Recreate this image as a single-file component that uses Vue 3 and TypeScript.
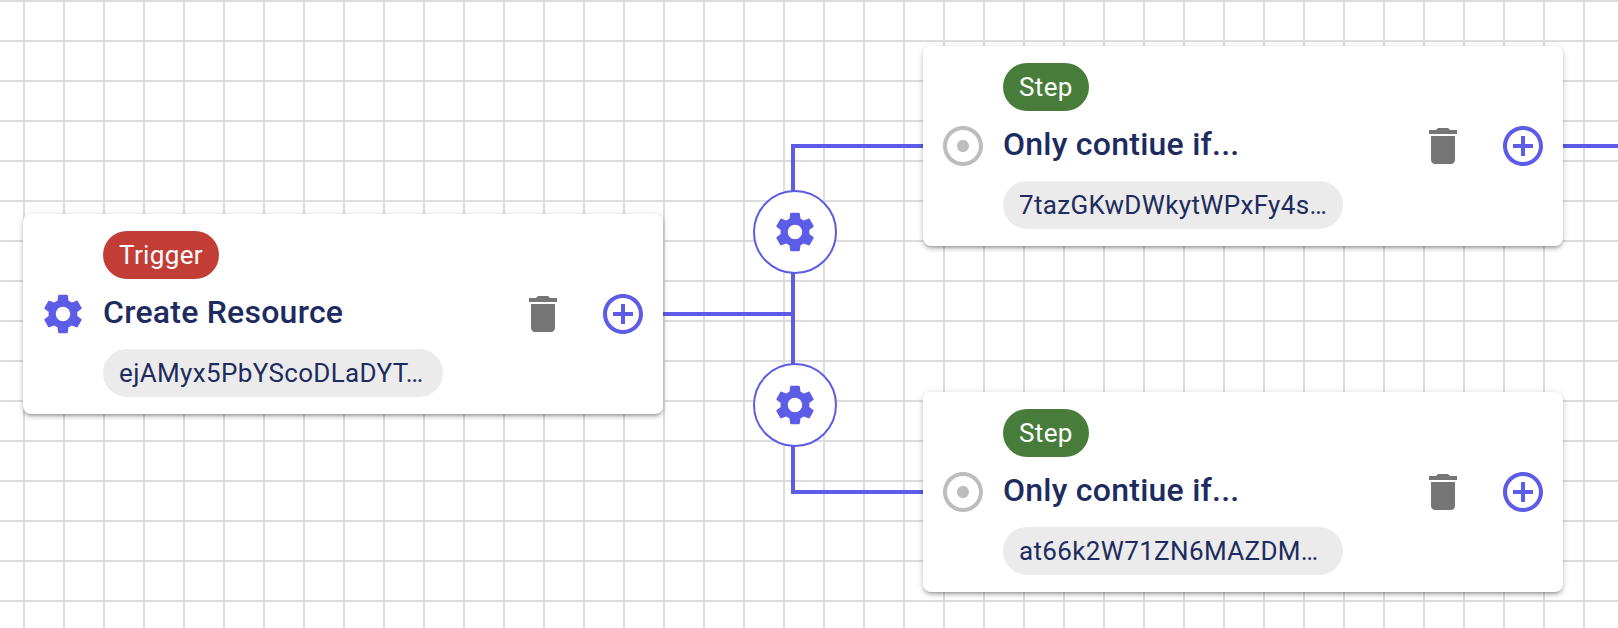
<script setup lang="ts">
interface FlowNode {
  id: string
  kind: 'trigger' | 'step'
  label: string
  title: string
  resource: string
  left: number
  top: number
}

const nodes: FlowNode[] = [
  { id: 'a', kind: 'trigger', label: 'Trigger', title: 'Create Resource', resource: 'ejAMyx5PbYScoDLaDYT…', left: 23, top: 214 },
  { id: 'b', kind: 'step', label: 'Step', title: 'Only contiue if...', resource: '7tazGKwDWkytWPxFy4s…', left: 923, top: 46 },
  { id: 'c', kind: 'step', label: 'Step', title: 'Only contiue if...', resource: 'at66k2W71ZN6MAZDM…', left: 923, top: 392 }
]

const gears = [
  { id: 'g1', left: 753, top: 190 },
  { id: 'g2', left: 753, top: 363 }
]

const gearPath = 'M19.14 12.94c.04-.3.06-.61.06-.94 0-.32-.02-.64-.07-.94l2.03-1.58c.18-.14.23-.41.12-.61l-1.92-3.32c-.12-.22-.37-.29-.59-.22l-2.39.96c-.5-.38-1.03-.7-1.62-.94l-.36-2.54c-.04-.24-.24-.41-.48-.41h-3.84c-.24 0-.43.17-.47.41l-.36 2.54c-.59.24-1.13.57-1.62.94l-2.39-.96c-.22-.08-.47 0-.59.22L2.74 8.87c-.12.21-.08.47.12.61l2.03 1.58c-.05.3-.09.63-.09.94s.02.64.07.94l-2.03 1.58c-.18.14-.23.41-.12.61l1.92 3.32c.12.22.37.29.59.22l2.39-.96c.5.38 1.03.7 1.62.94l.36 2.54c.05.24.24.41.48.41h3.84c.24 0 .44-.17.47-.41l.36-2.54c.59-.24 1.13-.56 1.62-.94l2.39.96c.22.08.47 0 .59-.22l1.92-3.32c.12-.22.07-.47-.12-.61l-2.01-1.58zM12 15.6c-1.98 0-3.6-1.62-3.6-3.6s1.62-3.6 3.6-3.6 3.6 1.62 3.6 3.6-1.62 3.6-3.6 3.6z'
</script>

<template>
  <div class="canvas">
    <svg class="wires" width="1618" height="628" viewBox="0 0 1618 628">
      <path d="M663 314H793" />
      <path d="M923 146H793V492H923" />
      <path d="M1563 146H1618" />
    </svg>

    <button
      v-for="g in gears"
      :key="g.id"
      class="junction"
      :style="{ left: g.left + 'px', top: g.top + 'px' }"
    >
      <svg class="icon accent" viewBox="0 0 24 24"><path :d="gearPath" /></svg>
    </button>

    <article
      v-for="n in nodes"
      :key="n.id"
      class="card"
      :style="{ left: n.left + 'px', top: n.top + 'px' }"
    >
      <svg v-if="n.kind === 'trigger'" class="icon accent" viewBox="0 0 24 24"><path :d="gearPath" /></svg>
      <svg v-else class="icon muted" viewBox="0 0 24 24">
        <path d="M12 2C6.49 2 2 6.49 2 12s4.49 10 10 10 10-4.49 10-10S17.51 2 12 2zm0 18c-4.41 0-8-3.59-8-8s3.59-8 8-8 8 3.59 8 8-3.59 8-8 8zm3-8c0 1.66-1.34 3-3 3s-3-1.34-3-3 1.34-3 3-3 3 1.34 3 3z" />
      </svg>

      <div class="body">
        <span class="chip" :class="n.kind">{{ n.label }}</span>
        <h3 class="title">{{ n.title }}</h3>
        <span class="pill">{{ n.resource }}</span>
      </div>

      <svg class="icon trash" viewBox="0 0 24 24">
        <path d="M6 19c0 1.1.9 2 2 2h8c1.1 0 2-.9 2-2V7H6v12zM19 4h-3.5l-1-1h-5l-1 1H5v2h14V4z" />
      </svg>
      <svg class="icon accent" viewBox="0 0 24 24">
        <path d="M13 7h-2v4H7v2h4v4h2v-4h4v-2h-4V7zm-1-5C6.48 2 2 6.48 2 12s4.48 10 10 10 10-4.48 10-10S17.52 2 12 2zm0 18c-4.41 0-8-3.59-8-8s3.59-8 8-8 8 3.59 8 8-3.59 8-8 8z" />
      </svg>
    </article>
  </div>
</template>

<style>
html, body { margin: 0; background: #fff; }
</style>

<style scoped>
.canvas {
  position: relative;
  width: 1618px;
  height: 628px;
  overflow: hidden;
  font-family: Roboto, "Liberation Sans", sans-serif;
  background-color: #fff;
  background-image:
    linear-gradient(#dddddd 2px, transparent 2px),
    linear-gradient(90deg, #dddddd 2px, transparent 2px);
  background-size: 40px 40px;
  background-position: 23px 0;
}
.wires { position: absolute; left: 0; top: 0; }
.wires path { fill: none; stroke: #5c5ce6; stroke-width: 4; }
.junction {
  position: absolute;
  box-sizing: border-box;
  width: 84px;
  height: 84px;
  padding: 0;
  display: flex;
  align-items: center;
  justify-content: center;
  background: #fff;
  border: 2px solid #5c5ce6;
  border-radius: 50%;
}
.card {
  position: absolute;
  box-sizing: border-box;
  width: 640px;
  height: 200px;
  padding: 0 16px;
  display: flex;
  align-items: center;
  gap: 16px;
  background: #fff;
  border-radius: 8px;
  box-shadow: 0 3px 3px -2px rgba(0,0,0,.24), 0 3px 4px 0 rgba(0,0,0,.16), 0 1px 8px 0 rgba(0,0,0,.12);
}
.icon { width: 48px; height: 48px; flex: none; display: block; }
.accent { fill: #5c5ce6; }
.muted { fill: #bdbdbd; }
.trash { fill: #757575; margin-right: 16px; }
.body {
  flex: 1;
  min-width: 0;
  display: flex;
  flex-direction: column;
  align-items: flex-start;
  gap: 16px;
}
.chip {
  box-sizing: border-box;
  height: 48px;
  padding: 0 16px;
  display: flex;
  align-items: center;
  border-radius: 24px;
  color: #fff;
  font-size: 26px;
  letter-spacing: 0.35px;
}
.trigger { background: #c23d36; }
.step { background: #487c3b; }
.title {
  margin: 0;
  height: 38px;
  line-height: 34px;
  font-size: 32px;
  font-weight: 500;
  letter-spacing: 0.24px;
  color: #1e2b5e;
}
.pill {
  box-sizing: border-box;
  width: 340px;
  height: 48px;
  padding: 0 16px;
  display: flex;
  align-items: center;
  border-radius: 24px;
  background: #ebebeb;
  color: #1e2b5e;
  font-size: 26px;
  letter-spacing: 0.35px;
  white-space: nowrap;
}
</style>
